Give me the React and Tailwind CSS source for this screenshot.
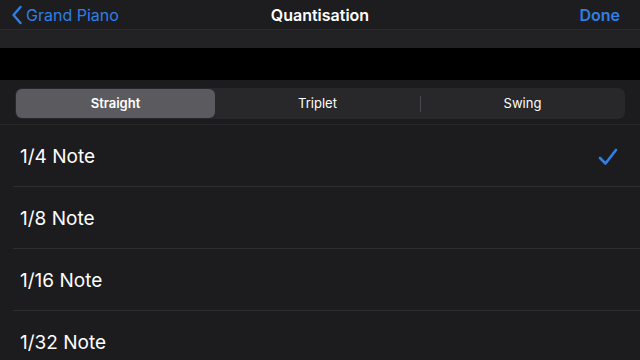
import React from "react";

const notes = ["1/4 Note", "1/8 Note", "1/16 Note", "1/32 Note"];

const Check = () => (
  <svg width="20" height="18" viewBox="0 0 20 18" fill="none">
    <path d="M2 10 L7.5 15.5 L18 2" stroke="#2f80ed" strokeWidth="2.6" strokeLinecap="round" strokeLinejoin="round" />
  </svg>
);

export default function App() {
  return (
    <div className="w-[640px] h-[360px] overflow-hidden bg-[#1c1c1e] text-white" style={{ fontFamily: "Inter, 'Noto Sans', sans-serif" }}>
      {/* nav bar */}
      <div className="h-[30px] flex items-center relative bg-[#1d1d1f] border-b border-[#2a2a2c]">
        <div className="flex items-center pl-[11px] text-[#2f7fe6] text-[16px]">
          <svg width="12" height="20" viewBox="0 0 12 20" fill="none">
            <path d="M9.5 2 L2.5 10 L9.5 18" stroke="#2f7fe6" strokeWidth="2.4" strokeLinecap="round" strokeLinejoin="round" />
          </svg>
          <span className="ml-[3px]">Grand Piano</span>
        </div>
        <div className="absolute left-0 right-0 text-center text-[16px] font-semibold pointer-events-none">Quantisation</div>
        <div className="ml-auto pr-[20px] text-[#2f7fe6] text-[16px] font-semibold">Done</div>
      </div>
      <div className="h-[18px] bg-[#222224]" />
      <div className="h-[32px] bg-black" />
      {/* segmented control */}
      <div className="h-[45px] bg-[#1c1c1e] flex items-center px-[15px] pt-[3px] border-b border-[#28282a]">
        <div className="w-full h-[31px] rounded-[7px] bg-[#28282b] flex items-center p-[1px] text-[13px]">
          <div className="w-[199px] h-full rounded-[6px] bg-[#5b5b5f] flex items-center justify-center font-semibold">Straight</div>
          <div className="flex-1 h-full flex items-center justify-center">Triplet</div>
          <div className="w-px h-[16px] bg-[#4a4a4e]" />
          <div className="w-[203px] h-full flex items-center justify-center">Swing</div>
        </div>
      </div>
      {/* list */}
      <div>
        {notes.map((n, i) => (
          <div key={n} className="h-[62px] pl-[13px] flex">
            <div className={`flex-1 flex items-center pl-[7px] pr-[22px] pt-[3px] ${i < notes.length - 1 ? "border-b border-[#2e2e30]" : ""}`}>
              <span className="text-[19px]">{n}</span>
              {i === 0 && (
                <span className="ml-auto">
                  <Check />
                </span>
              )}
            </div>
          </div>
        ))}
      </div>
    </div>
  );
}
